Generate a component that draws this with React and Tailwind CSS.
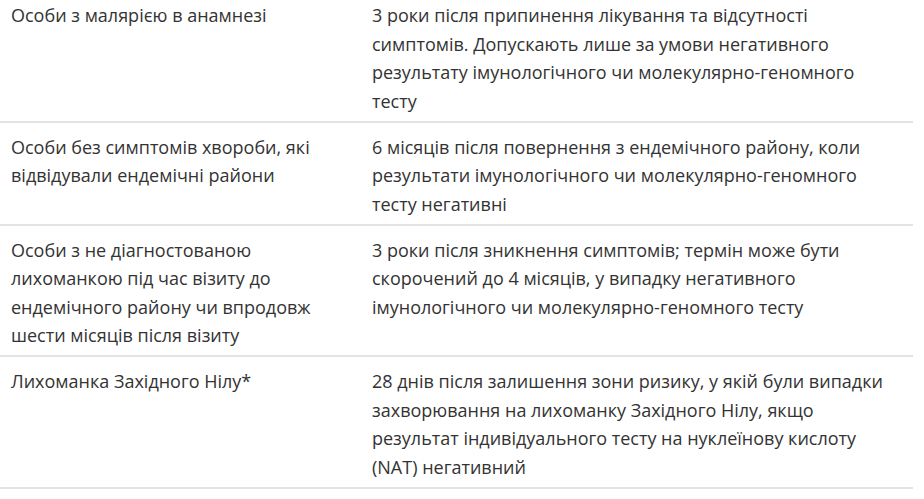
import React from 'react';

const rows = [
  {
    who: 'Особи з малярією в анамнезі',
    term: '3 роки після припинення лікування та відсутності симптомів. Допускають лише за умови негативного результату імунологічного чи молекулярно-геномного тесту',
  },
  {
    who: 'Особи без симптомів хвороби, які відвідували ендемічні райони',
    term: '6 місяців після повернення з ендемічного району, коли результати імунологічного чи молекулярно-геномного тесту негативні',
  },
  {
    who: 'Особи з не діагностованою лихоманкою під час візиту до ендемічного району чи впродовж шести місяців після візиту',
    term: '3 роки після зникнення симптомів; термін може бути скорочений до 4 місяців, у випадку негативного імунологічного чи молекулярно-геномного тесту',
  },
  {
    who: 'Лихоманка Західного Нілу*',
    term: '28 днів після залишення зони ризику, у якій були випадки захворювання на лихоманку Західного Нілу, якщо результат індивідуального тесту на нуклеїнову кислоту (NAT) негативний',
  },
];

const App = () => {
  return (
    <div className="min-h-screen bg-white text-[#333333] font-['Open_Sans',sans-serif] text-[18px] leading-[28.5px]">
      <table className="w-[913px] border-collapse">
        <tbody>
          {rows.map((row, i) => (
            <tr key={i} className="border-b-2 border-[#e3e3e3]">
              <td
                className={`w-[360px] align-top pl-[11px] pr-[25px] pb-[5.5px] ${i === 0 ? 'pt-[1px]' : 'pt-[10px]'}`}
              >
                {row.who}
              </td>
              <td
                className={`align-top pl-[12px] pr-[22px] pb-[5.5px] ${i === 0 ? 'pt-[1px]' : 'pt-[10px]'}`}
              >
                {row.term}
              </td>
            </tr>
          ))}
        </tbody>
      </table>
    </div>
  );
};

export default App;
